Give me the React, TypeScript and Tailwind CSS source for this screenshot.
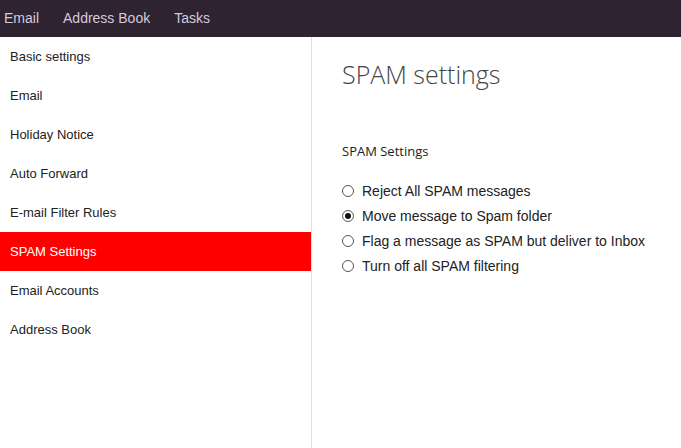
import React from "react";

const side = ["Basic settings","Email","Holiday Notice","Auto Forward","E-mail Filter Rules","SPAM Settings","Email Accounts","Address Book"];
const opts = ["Reject All SPAM messages","Move message to Spam folder","Flag a message as SPAM but deliver to Inbox","Turn off all SPAM filtering"];

export default function App() {
  return (
    <div className="w-[681px] h-[448px] flex flex-col bg-white overflow-hidden" style={{ fontFamily: '"Liberation Sans", Arial, sans-serif' }}>
      <div className="h-[37px] bg-[#2e2331] flex items-center text-[14px] text-[#d6c9dc] shrink-0">
        <span className="ml-[4px]">Email</span>
        <span className="ml-[24px]">Address Book</span>
        <span className="ml-[24px]">Tasks</span>
      </div>
      <div className="flex flex-1">
        <div className="w-[312px] border-r border-[#e0e0e0] shrink-0">
          {side.map((s) => (
            <div key={s} className={`h-[39px] flex items-center pl-[10px] text-[13px] ${s === "SPAM Settings" ? "bg-[#ff0000] text-white" : "text-[#222]"}`}>{s}</div>
          ))}
        </div>
        <div className="pl-[30px] pt-[20px]">
          <div className="text-[25px] text-[#444] font-light leading-[34px]" style={{ fontFamily: '"Open Sans", sans-serif' }}>SPAM settings</div>
          <div className="mt-[51px] text-[13px] text-[#222]" style={{ fontFamily: '"Open Sans", sans-serif' }}>SPAM Settings</div>
          <div className="mt-[17px] flex flex-col">
            {opts.map((o, i) => (
              <div key={o} className="h-[25px] flex items-center text-[14px] text-[#222]">
                <span className="w-[12px] h-[12px] rounded-full border border-[#555] flex items-center justify-center mr-[8px] bg-white">
                  {i === 1 && <span className="w-[6px] h-[6px] rounded-full bg-[#111]" />}
                </span>
                {o}
              </div>
            ))}
          </div>
        </div>
      </div>
    </div>
  );
}
